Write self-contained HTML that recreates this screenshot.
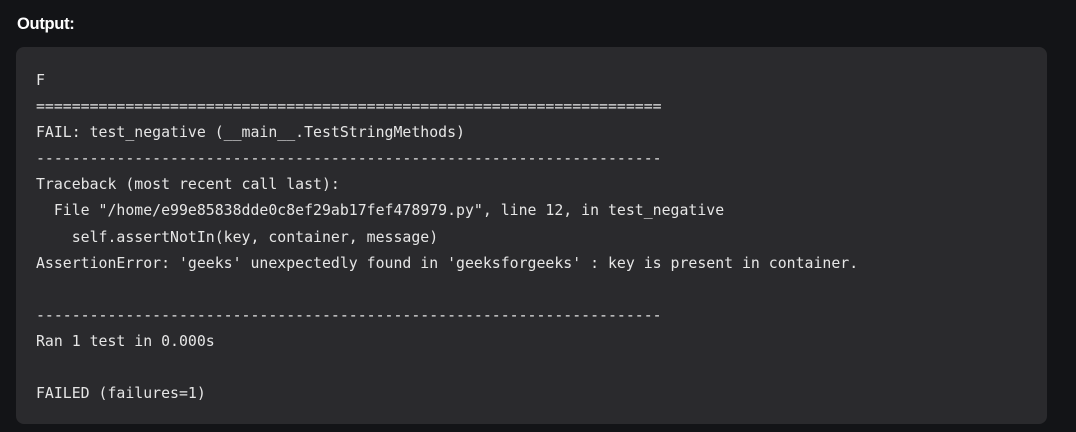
<!DOCTYPE html>
<html><head><meta charset="utf-8"><style>
html,body{margin:0;padding:0;background:#131417;width:1076px;height:432px;overflow:hidden}
.h{position:absolute;left:17px;top:15px;font-family:"Liberation Sans",sans-serif;font-weight:bold;font-size:16.5px;color:#fff;letter-spacing:-0.3px}
.box{position:absolute;left:16px;top:47px;width:1031px;height:377px;background:#2a2a2d;border-radius:8px}
pre{position:absolute;left:36px;top:67px;margin:0;font-family:"DejaVu Sans Mono",monospace;font-size:14.85px;line-height:26.1px;color:#e6e6e6}
</style></head><body>
<div class="h">Output:</div>
<div class="box"></div>
<pre>F
======================================================================
FAIL: test_negative (__main__.TestStringMethods)
----------------------------------------------------------------------
Traceback (most recent call last):
  File "/home/e99e85838dde0c8ef29ab17fef478979.py", line 12, in test_negative
    self.assertNotIn(key, container, message)
AssertionError: 'geeks' unexpectedly found in 'geeksforgeeks' : key is present in container.

----------------------------------------------------------------------
Ran 1 test in 0.000s

FAILED (failures=1)</pre>
</body></html>
